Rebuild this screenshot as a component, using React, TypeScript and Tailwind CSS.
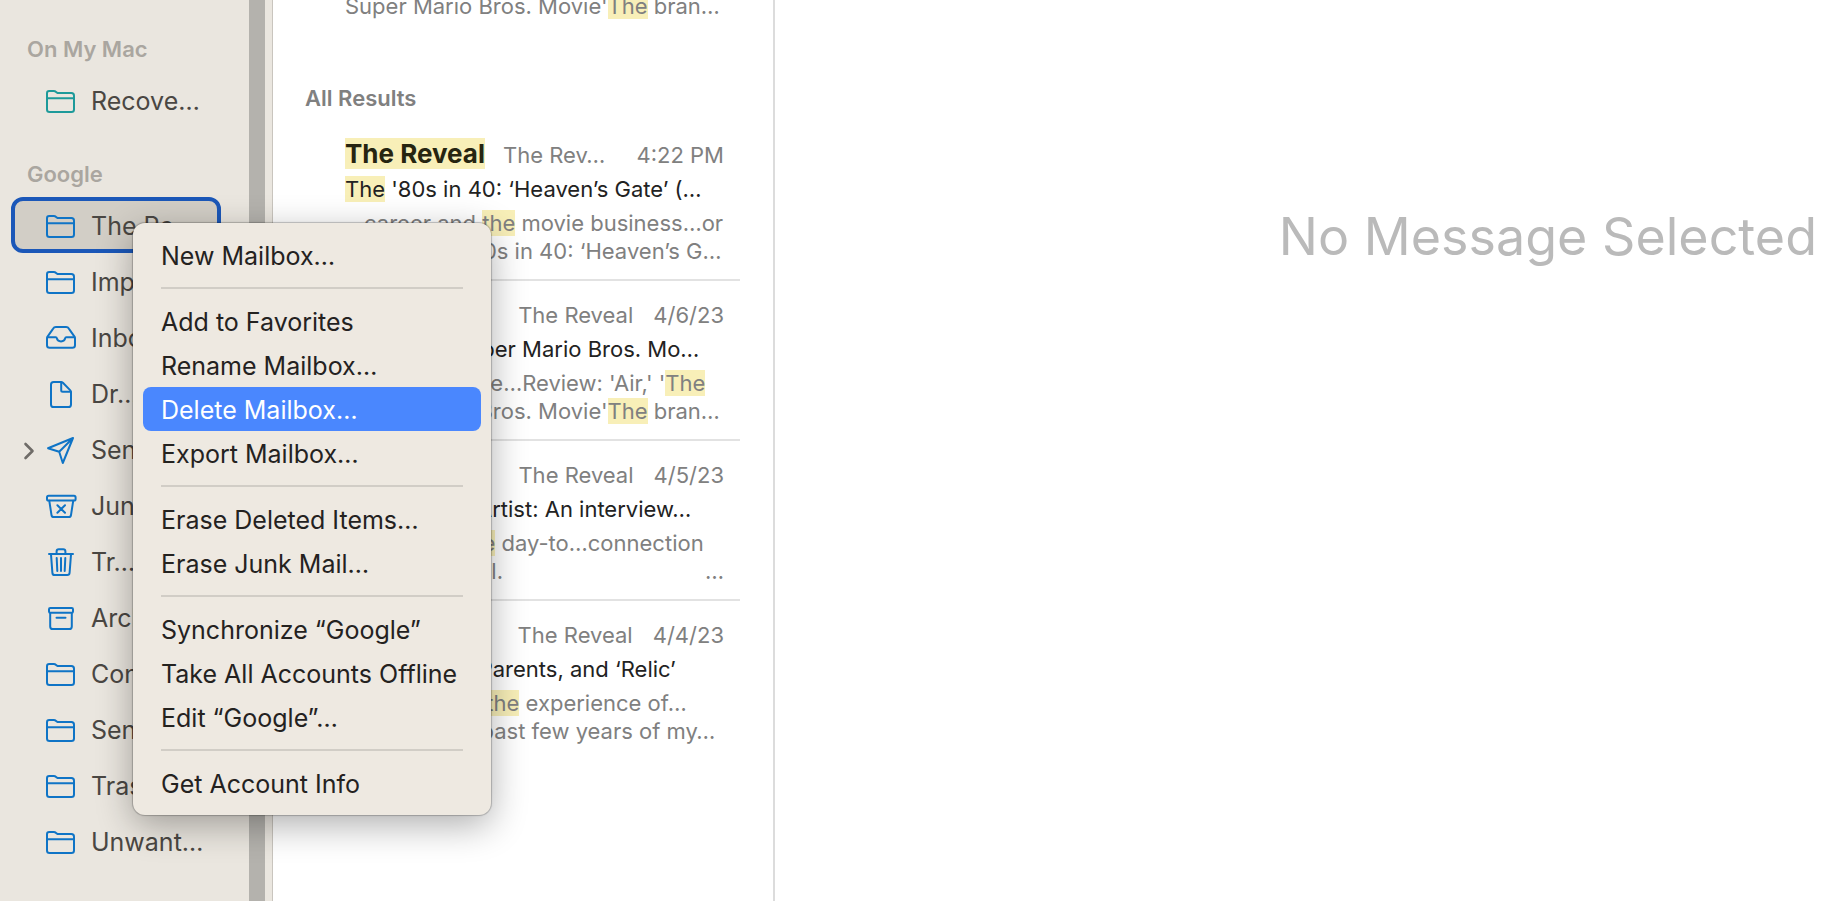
import type { ReactNode } from "react";

type IconName = "folder" | "inbox" | "draft" | "sent" | "junk" | "trash" | "archive";

const iconPaths: Record<IconName, ReactNode> = {
  folder: (
    <>
      <path d="M2 23.5V7.2C2 5.8 2.8 5 4.2 5h4.6c1 0 1.6.3 2.3.9l.6.5c.6.5 1.2.7 2.1.7h12.6c1.6 0 2.6 1 2.6 2.6v13.8c0 1.6-1 2.5-2.6 2.5H4.6C3 26 2 25.1 2 23.5Z" />
      <path d="M2 12.2h27" />
    </>
  ),
  inbox: (
    <>
      <path d="M2 15.6c0-1 .2-1.500.7-2.300L8 5.800C8.700 4.600 9.500 4 10.900 4h10.200c1.400 0 2.200.6 2.900 1.800l5.300 7.500c.5.800.7 1.300.7 2.300v6.600c0 1.600-1 2.600-2.700 2.600H4.700C3 24.800 2 23.800 2 22.200Z" />
      <path d="M2.400 14.200h8.300c.7 0 1 .4 1.100 1 .3 1.900 1.900 3.200 4.200 3.200s3.900-1.300 4.200-3.200c.1-.6.4-1 1.100-1h8.300" />
    </>
  ),
  draft: (
    <>
      <path d="M6 25.400V5.600C6 4 7 3 8.600 3h7.200c.9 0 1.500.2 2.100.8l7.200 7.300c.6.6.9 1.200.9 2.100v12.200c0 1.600-1 2.600-2.600 2.600H8.600C7 28 6 27 6 25.400Z" />
      <path d="M16.200 3.200v8c0 1 .5 1.500 1.500 1.500h8" />
    </>
  ),
  sent: <path d="M28 3 3 13.200l11.200 3.600L17.800 28Zm0 0L14.200 16.800" />,
  junk: (
    <>
      <rect x="2" y="4.800" width="28.600" height="4.800" rx="1.600" />
      <path d="m4.300 9.800 2.200 14.300c.2 1.400 1 2 2.300 2h14.900c1.300 0 2.100-.6 2.300-2l2.200-14.300M12.400 14.200l7.600 7.600m0-7.600-7.600 7.600" />
    </>
  ),
  trash: (
    <>
      <path d="M4 7h24M6 7.300l1.400 18.500c.1 1.500 1 2.300 2.400 2.300h12.400c1.400 0 2.300-.8 2.400-2.300L26 7.300" />
      <path d="M11.600 6.800V4.400c0-1.400.8-2.200 2.200-2.200h4.400c1.400 0 2.200.8 2.200 2.200v2.400M11.700 11l.6 13M16 11v13M20.300 11l-.6 13" />
    </>
  ),
  archive: (
    <>
      <rect x="4" y="5" width="24" height="4.800" rx="1.300" />
      <path d="M5.200 10v13.400c0 1.600 1 2.600 2.600 2.600h16.400c1.600 0 2.600-1 2.600-2.600V10M11.500 14.700h9" />
    </>
  ),
};

function Icon({ name, className }: { name: IconName; className: string }) {
  return (
    <svg
      viewBox="0 0 32 32"
      aria-hidden="true"
      className={`size-8 shrink-0 ${className}`}
      fill="none"
      stroke="currentColor"
      strokeWidth="2"
      strokeLinecap="round"
      strokeLinejoin="round"
    >
      {iconPaths[name]}
    </svg>
  );
}

type Mailbox = { icon: IconName; label: string; selected?: boolean; local?: boolean; expandable?: boolean };

const googleMailboxes: Mailbox[] = [
  { icon: "folder", label: "The Re…", selected: true },
  { icon: "folder", label: "Impor…" },
  { icon: "inbox", label: "Inbox" },
  { icon: "draft", label: "Dr…" },
  { icon: "sent", label: "Sent", expandable: true },
  { icon: "junk", label: "Junk" },
  { icon: "trash", label: "Tr…" },
  { icon: "archive", label: "Archive" },
  { icon: "folder", label: "Conv…" },
  { icon: "folder", label: "Sent" },
  { icon: "folder", label: "Trash" },
  { icon: "folder", label: "Unwant…" },
];

function MailboxRow({ icon, label, selected, local, expandable }: Mailbox) {
  return (
    <li>
      <button
        type="button"
        className={`flex h-14 w-full items-center rounded-xl border-4 pt-[3px] pl-2 text-left text-[25px] text-[#4a4743] ${
          selected ? "border-[#1b57b8] bg-[#d2cec6]" : "border-transparent"
        }`}
      >
        <span className="flex w-[22px] shrink-0">
          {expandable && (
            <svg viewBox="0 0 12 18" aria-hidden="true" className="h-[18px] w-3" fill="none" stroke="#6f6c68" strokeWidth="2.600" strokeLinecap="round" strokeLinejoin="round">
              <path d="m2.500 2 7 7-7 7" />
            </svg>
          )}
        </span>
        <Icon name={icon} className={local ? "text-[#1d9a9a]" : "text-[#0f74c6]"} />
        <span className="ml-[14px] whitespace-nowrap">{label}</span>
      </button>
    </li>
  );
}

function SectionTitle({ children }: { children: ReactNode }) {
  return <h2 className="px-4 pt-8 pb-[9px] text-[22px] leading-7 font-semibold text-[#aaa6a0]">{children}</h2>;
}

function Mark({ children }: { children: ReactNode }) {
  return <mark className="bg-[#f8efb8] text-inherit">{children}</mark>;
}

type Message = {
  mailbox: string;
  date: string;
  subject: ReactNode;
  first: ReactNode;
  second: ReactNode;
  mailboxClass: string;
};

const messages: Message[] = [
  {
    mailbox: "The Rev…",
    date: "4:22 PM",
    mailboxClass: "mr-auto ml-[18px]",
    subject: <><Mark>The</Mark> '80s in 40: ‘Heaven’s Gate’ (…</>,
    first: <>…career and <Mark>the</Mark> movie business…or</>,
    second: <>more…<Mark>The</Mark> '80s in 40: ‘Heaven’s G…</>,
  },
  {
    mailbox: "The Reveal",
    date: "4/6/23",
    mailboxClass: "mr-5 ml-auto",
    subject: <>'Air,'; '<Mark>The</Mark> Super Mario Bros. Mo…</>,
    first: <>…we subscribe…Review: 'Air,' '<Mark>The</Mark></>,
    second: <>Super Mario Bros. Movie'<Mark>The</Mark> bran…</>,
  },
  {
    mailbox: "The Reveal",
    date: "4/5/23",
    mailboxClass: "mr-5 ml-auto",
    subject: <>Profile of an Artist: An interview…</>,
    first: <>…lost from <Mark>the</Mark> day-to…connection</>,
    second: <span className="flex justify-between"><span>what feels real.</span><span>…</span></span>,
  },
  {
    mailbox: "The Reveal",
    date: "4/4/23",
    mailboxClass: "mr-5 ml-auto",
    subject: <>On Memory, Parents, and ‘Relic’</>,
    first: <>…deflects on <Mark>the</Mark> experience of…</>,
    second: <>family of the past few years of my…</>,
  },
];

function MessageRow({ message, last }: { message: Message; last: boolean }) {
  return (
    <li className={`mr-[33px] ml-[72px] h-40 border-b-2 pt-[15px] pr-4 whitespace-nowrap ${last ? "border-transparent" : "border-[#e2e2e2]"}`}>
      <div className="flex h-[37px] items-baseline text-[22px] leading-9 text-[#808080]">
        <span className="text-[26px] font-bold text-[#262410]"><Mark>The Reveal</Mark></span>
        <span className={message.mailboxClass}>{message.mailbox}</span>
        <time>{message.date}</time>
      </div>
      <p className="mb-1 text-[22px] leading-8 text-[#222]">{message.subject}</p>
      <p className="text-[22px] leading-7 text-[#808080]">{message.first}</p>
      <p className="text-[22px] leading-7 text-[#808080]">{message.second}</p>
    </li>
  );
}

const menuGroups: string[][] = [
  ["New Mailbox…"],
  ["Add to Favorites", "Rename Mailbox…", "Delete Mailbox…", "Export Mailbox…"],
  ["Erase Deleted Items…", "Erase Junk Mail…"],
  ["Synchronize “Google”", "Take All Accounts Offline", "Edit “Google”…"],
  ["Get Account Info"],
];

function ContextMenu() {
  return (
    <div
      role="menu"
      aria-label="Mailbox actions"
      className="absolute top-[223px] left-[133px] w-[358px] rounded-xl bg-[#eee9e1] p-[10px] shadow-[0_0_1px_1px_rgba(0,0,0,0.22),0_10px_36px_rgba(0,0,0,0.32)]"
    >
      {menuGroups.map((group, index) => (
        <div key={group[0]} role="group">
          {index > 0 && <hr className="mx-[18px] my-[10px] border-t-2 border-[#d1cdc6]" />}
          {group.map((item) => (
            <button
              key={item}
              type="button"
              role="menuitem"
              className={`block h-11 w-full rounded-lg px-[18px] pt-[3px] text-left text-[25px] whitespace-nowrap ${
                item === "Delete Mailbox…" ? "bg-[#4a87fe] text-white" : "text-[#24221f]"
              }`}
            >
              {item}
            </button>
          ))}
        </div>
      ))}
    </div>
  );
}

export default function App() {
  return (
    <div className="relative flex h-screen overflow-hidden bg-white font-['Inter','Liberation_Sans',sans-serif]">
      <nav aria-label="Mailboxes" className="flex w-[273px] shrink-0 border-r border-[#c9c5be] bg-[#eae6df]">
        <div className="min-w-0 flex-1 px-[11px] pt-[3px]">
          <div className="mr-[17px]">
            <SectionTitle>On My Mac</SectionTitle>
            <ul>
              <MailboxRow icon="folder" label="Recove…" local />
            </ul>
            <SectionTitle>Google</SectionTitle>
            <ul>
              {googleMailboxes.map((mailbox, index) => (
                <MailboxRow key={index} {...mailbox} />
              ))}
            </ul>
          </div>
        </div>
        <div className="mr-[7px] w-4 bg-[#b4b2ad]" />
      </nav>

      <main className="w-[502px] shrink-0 border-r-2 border-[#dcdcdc] bg-white">
        <div className="ml-[72px] flex h-5 items-end overflow-hidden">
          <p className="shrink-0 text-[22px] leading-7 whitespace-nowrap text-[#808080]">
            Super Mario Bros. Movie'<Mark>The</Mark> bran…
          </p>
        </div>
        <h2 className="px-8 pt-16 pb-[9px] text-[22px] leading-7 font-semibold text-[#808080]">All Results</h2>
        <ul>
          {messages.map((message, index) => (
            <MessageRow key={message.date} message={message} last={index === messages.length - 1} />
          ))}
        </ul>
      </main>

      <section className="min-w-0 flex-1 pt-[201px] pr-[14px] text-right">
        <p className="text-[52px] leading-[72px] font-normal whitespace-nowrap text-[#bababa]">No Message Selected</p>
      </section>

      <ContextMenu />
    </div>
  );
}
